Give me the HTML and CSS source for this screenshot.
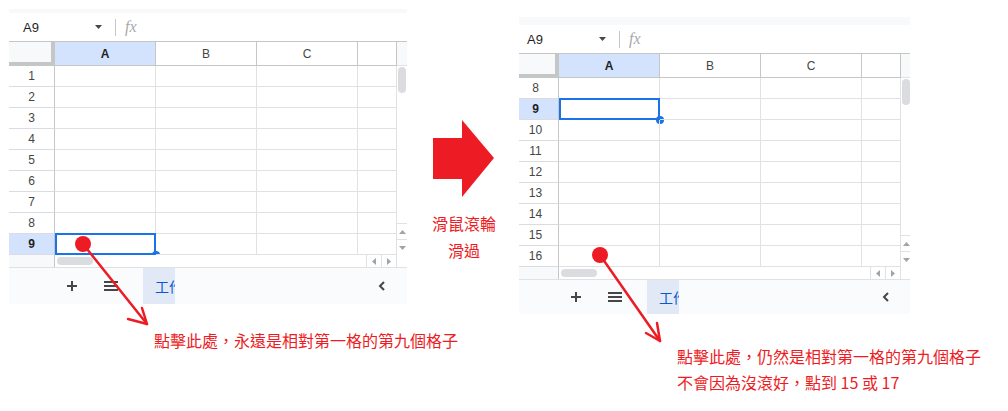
FILE: index.html
```html
<!DOCTYPE html>
<html lang="zh-Hant">
<head>
<meta charset="utf-8">
<title>滑鼠滾輪</title>
<link rel="stylesheet" href="styles.css">
</head>
<body>
<div class="page">
  <div class="col-left">
    <div class="sheet">
      <div class="strip"></div>
      <div class="namebar">
        <span class="cellref">A9</span>
        <svg class="dd" viewBox="0 0 7 4"><path d="M0 0h7L3.5 4z"/></svg>
        <span class="sep"></span>
        <span class="fx">fx</span>
      </div>
      <div class="body">
        <div class="cells">
          <div class="c h corner"></div>
          <div class="c h col on">A</div>
          <div class="c h col">B</div>
          <div class="c h col">C</div>
          <div class="c h col"></div>
          <div class="c rh">1</div><div class="c"></div><div class="c"></div><div class="c"></div><div class="c"></div>
          <div class="c rh">2</div><div class="c"></div><div class="c"></div><div class="c"></div><div class="c"></div>
          <div class="c rh">3</div><div class="c"></div><div class="c"></div><div class="c"></div><div class="c"></div>
          <div class="c rh">4</div><div class="c"></div><div class="c"></div><div class="c"></div><div class="c"></div>
          <div class="c rh">5</div><div class="c"></div><div class="c"></div><div class="c"></div><div class="c"></div>
          <div class="c rh">6</div><div class="c"></div><div class="c"></div><div class="c"></div><div class="c"></div>
          <div class="c rh">7</div><div class="c"></div><div class="c"></div><div class="c"></div><div class="c"></div>
          <div class="c rh">8</div><div class="c"></div><div class="c"></div><div class="c"></div><div class="c"></div>
          <div class="c rh on">9</div><div class="c"><span class="selbox"></span><span class="handle"></span></div><div class="c"></div><div class="c"></div><div class="c"></div>
        </div>
        <div class="vscroll">
          <div class="vs-head"></div>
          <div class="vthumb"></div>
          <div class="vbtns">
            <div class="vbtn"><svg viewBox="0 0 7 4"><path d="M0 4h7L3.5 0z"/></svg></div>
            <div class="vbtn"><svg viewBox="0 0 7 4"><path d="M0 0h7L3.5 4z"/></svg></div>
          </div>
        </div>
      </div>
      <div class="hscroll">
        <div class="hs-gutter"></div>
        <div class="hs-track"><div class="hthumb"></div></div>
        <div class="hs-btn"><svg viewBox="0 0 4 7"><path d="M4 0v7L0 3.5z"/></svg></div>
        <div class="hs-btn"><svg viewBox="0 0 4 7"><path d="M0 0v7L4 3.5z"/></svg></div>
        <div class="hs-corner"></div>
      </div>
      <div class="tabbar">
        <svg class="ic-plus" viewBox="0 0 10 10"><path d="M5 0v10M0 5h10"/></svg>
        <svg class="ic-menu" viewBox="0 0 14 10"><path d="M0 1h14M0 5h14M0 9h14"/></svg>
        <div class="tab">工作表1</div>
        <svg class="ic-chev" viewBox="0 0 7 10"><path d="M6 1L2 5l4 4"/></svg>
      </div>
    </div>
    <p class="caption caption--left">點擊此處，永遠是相對第一格的第九個格子</p>
  </div>

  <div class="col-mid">
    <svg class="bigarrow" viewBox="0 0 62 78"><path d="M0 18H29V0L61 38 29 77V59H0z"/></svg>
    <p class="midtext">滑鼠滾輪<br>滑過</p>
  </div>

  <div class="col-right">
    <div class="clip">
      <div class="sheet sheet--b">
        <div class="strip"></div>
        <div class="namebar">
          <span class="cellref">A9</span>
          <svg class="dd" viewBox="0 0 7 4"><path d="M0 0h7L3.5 4z"/></svg>
          <span class="sep"></span>
          <span class="fx">fx</span>
        </div>
        <div class="body">
          <div class="cells">
            <div class="c h corner"></div>
            <div class="c h col on">A</div>
            <div class="c h col">B</div>
            <div class="c h col">C</div>
            <div class="c h col"></div>
            <div class="c rh">8</div><div class="c"></div><div class="c"></div><div class="c"></div><div class="c"></div>
            <div class="c rh on">9</div><div class="c"><span class="selbox"></span><span class="handle"></span></div><div class="c"></div><div class="c"></div><div class="c"></div>
            <div class="c rh">10</div><div class="c"></div><div class="c"></div><div class="c"></div><div class="c"></div>
            <div class="c rh">11</div><div class="c"></div><div class="c"></div><div class="c"></div><div class="c"></div>
            <div class="c rh">12</div><div class="c"></div><div class="c"></div><div class="c"></div><div class="c"></div>
            <div class="c rh">13</div><div class="c"></div><div class="c"></div><div class="c"></div><div class="c"></div>
            <div class="c rh">14</div><div class="c"></div><div class="c"></div><div class="c"></div><div class="c"></div>
            <div class="c rh">15</div><div class="c"></div><div class="c"></div><div class="c"></div><div class="c"></div>
            <div class="c rh">16</div><div class="c"></div><div class="c"></div><div class="c"></div><div class="c"></div>
          </div>
          <div class="vscroll">
            <div class="vs-head"></div>
            <div class="vthumb"></div>
            <div class="vbtns">
              <div class="vbtn"><svg viewBox="0 0 7 4"><path d="M0 4h7L3.5 0z"/></svg></div>
              <div class="vbtn"><svg viewBox="0 0 7 4"><path d="M0 0h7L3.5 4z"/></svg></div>
            </div>
          </div>
        </div>
        <div class="hscroll">
          <div class="hs-gutter"></div>
          <div class="hs-track"><div class="hthumb"></div></div>
          <div class="hs-btn"><svg viewBox="0 0 4 7"><path d="M4 0v7L0 3.5z"/></svg></div>
          <div class="hs-btn"><svg viewBox="0 0 4 7"><path d="M0 0v7L4 3.5z"/></svg></div>
          <div class="hs-corner"></div>
        </div>
        <div class="tabbar">
          <svg class="ic-plus" viewBox="0 0 10 10"><path d="M5 0v10M0 5h10"/></svg>
          <svg class="ic-menu" viewBox="0 0 14 10"><path d="M0 1h14M0 5h14M0 9h14"/></svg>
          <div class="tab">工作表1</div>
          <svg class="ic-chev" viewBox="0 0 7 10"><path d="M6 1L2 5l4 4"/></svg>
        </div>
      </div>
    </div>
    <p class="caption caption--right">點擊此處，仍然是相對第一格的第九個格子<br>不會因為沒滾好，點到 15 或 17</p>
  </div>

  <svg class="marks" viewBox="0 0 1008 411">
    <g class="mk">
      <line x1="83" y1="244" x2="147" y2="324"/>
      <polyline points="128,319 147,324 142,308"/>
      <line x1="600" y1="255" x2="660" y2="341"/>
      <polyline points="646,333 660,341 657,323"/>
    </g>
    <circle class="dot" cx="83" cy="244" r="8"/>
    <circle class="dot" cx="600" cy="255" r="8"/>
  </svg>
</div>
</body>
</html>
```

FILE: styles.css
```css
* { box-sizing: border-box; }
body { margin: 0; background: #fff; font-family: "Liberation Sans", Arial, sans-serif; }
p { margin: 0; }

.page {
  position: relative;
  width: 1008px;
  height: 411px;
  display: flex;
  align-items: flex-start;
  padding: 9px 0 0 9px;
  overflow: hidden;
}

.col-left { width: 398px; flex: none; }
.col-mid {
  width: 112px;
  flex: none;
  padding-left: 2px;
  display: flex;
  flex-direction: column;
  align-items: center;
}
.col-right { width: 391px; flex: none; margin-top: 8px; }
.clip { width: 391px; overflow: hidden; }
.clip .sheet { margin-left: -6px; }

/* sheet */
.sheet { width: 398px; }
.strip { height: 4px; background: #f8f9fa; }
.sheet--b .strip { height: 8px; }

.namebar {
  height: 28px;
  display: flex;
  align-items: center;
  padding-left: 14px;
  background: #fff;
}
.cellref { width: 72px; font-size: 13px; color: #1f1f1f; }
.dd { width: 7px; height: 4px; fill: #444746; }
.sep { width: 1px; height: 17px; background: #c7c7c7; margin-left: 13px; }
.fx {
  margin-left: 9px;
  font-family: "Liberation Serif", serif;
  font-style: italic;
  font-size: 16px;
  color: #a8a8a8;
}

.body { display: flex; border-top: 1px solid #c4c7c5; }
.cells {
  display: grid;
  grid-template-columns: 46px 101px 101px 101px 39px;
  grid-template-rows: 24px;
  grid-auto-rows: 21px;
  overflow: hidden;
}
.c {
  position: relative;
  border-right: 1px solid #e1e1e1;
  border-bottom: 1px solid #e1e1e1;
}
.h {
  display: flex;
  align-items: center;
  justify-content: center;
  font-size: 12px;
  color: #444746;
  background: #fff;
  border-bottom-color: #c4c7c5;
}
.h.col { border-right-color: #c4c7c5; }
.corner {
  background: #f8f9fa;
  border-right: 4px solid #c4c7c5;
  border-bottom: 4px solid #c4c7c5;
}
.rh {
  display: flex;
  align-items: center;
  justify-content: center;
  font-size: 12px;
  color: #444746;
  border-right-color: #c4c7c5;
  border-bottom-color: #dadce0;
}
.on { background: #d3e3fd; color: #1f1f1f; font-weight: bold; }

.selbox {
  position: absolute;
  left: 0;
  top: -1px;
  right: -1px;
  bottom: -1px;
  border: 2px solid #1a73e8;
}
.handle {
  position: absolute;
  right: -5px;
  bottom: -5px;
  width: 8px;
  height: 8px;
  border-radius: 50%;
  background: #1a73e8;
}

.vscroll { width: 10px; display: flex; flex-direction: column; background: #fff; }
.vs-head { height: 24px; background: #f8f9fa; border-bottom: 1px solid #e1e1e1; }
.vthumb { margin: 1px 0 0 1px; width: 8px; height: 26px; border-radius: 4px; background: #dadce0; }
.vbtns { margin-top: auto; }
.vbtn {
  height: 16px;
  border-top: 1px solid #e1e1e1;
  display: flex;
  align-items: center;
  justify-content: center;
}
.vbtn svg { width: 7px; height: 4px; fill: #a0a4a8; }

.hscroll { height: 13px; display: flex; border-bottom: 1px solid #e1e1e1; }
.hs-gutter { width: 46px; background: #f8f9fa; border-right: 1px solid #c4c7c5; }
.hs-track { flex: 1; padding: 2px 0 0 2px; }
.hthumb { width: 36px; height: 8px; border-radius: 4px; background: #dadce0; }
.hs-btn {
  width: 15px;
  border-left: 1px solid #e1e1e1;
  display: flex;
  align-items: center;
  justify-content: center;
}
.hs-btn svg { width: 4px; height: 7px; fill: #a0a4a8; }
.hs-corner { width: 11px; border-left: 1px solid #e1e1e1; }

.tabbar {
  height: 36px;
  display: flex;
  align-items: center;
  padding-left: 58px;
  background: #f9fbfd;
}
.sheet--b .tabbar { height: 34px; }
.ic-plus { width: 10px; height: 10px; stroke: #444746; stroke-width: 2; fill: none; }
.ic-menu { width: 14px; height: 10px; margin-left: 27px; stroke: #444746; stroke-width: 2; fill: none; }
.tab {
  align-self: stretch;
  margin-left: 25px;
  width: 32px;
  padding-left: 12px;
  overflow: hidden;
  white-space: nowrap;
  display: flex;
  align-items: center;
  background: #e1e9f7;
  color: #0b57d0;
  font-size: 14px;
  font-family: "Noto Sans CJK TC", sans-serif;
}
.ic-chev {
  width: 7px;
  height: 10px;
  margin-left: auto;
  margin-right: 22px;
  stroke: #444746;
  stroke-width: 2;
  fill: none;
}

/* captions */
.caption {
  color: #ed1c24;
  font-family: "Noto Sans CJK TC", sans-serif;
  font-size: 16px;
  white-space: nowrap;
}
.caption--left { margin: 25px 0 0 145px; line-height: 22px; }
.caption--right { margin: 29px 0 0 158px; line-height: 26px; }

.bigarrow { width: 62px; height: 78px; margin-top: 111px; fill: #ed1c24; }
.midtext {
  margin-top: 12px;
  text-align: center;
  color: #ed1c24;
  font-family: "Noto Sans CJK TC", sans-serif;
  font-size: 16px;
  line-height: 27px;
}

.marks {
  position: absolute;
  left: 0;
  top: 0;
  width: 1008px;
  height: 411px;
  pointer-events: none;
}
.mk { stroke: #ed1c24; stroke-width: 2.5; fill: none; stroke-linecap: round; stroke-linejoin: round; }
.dot { fill: #ed1c24; }
```
